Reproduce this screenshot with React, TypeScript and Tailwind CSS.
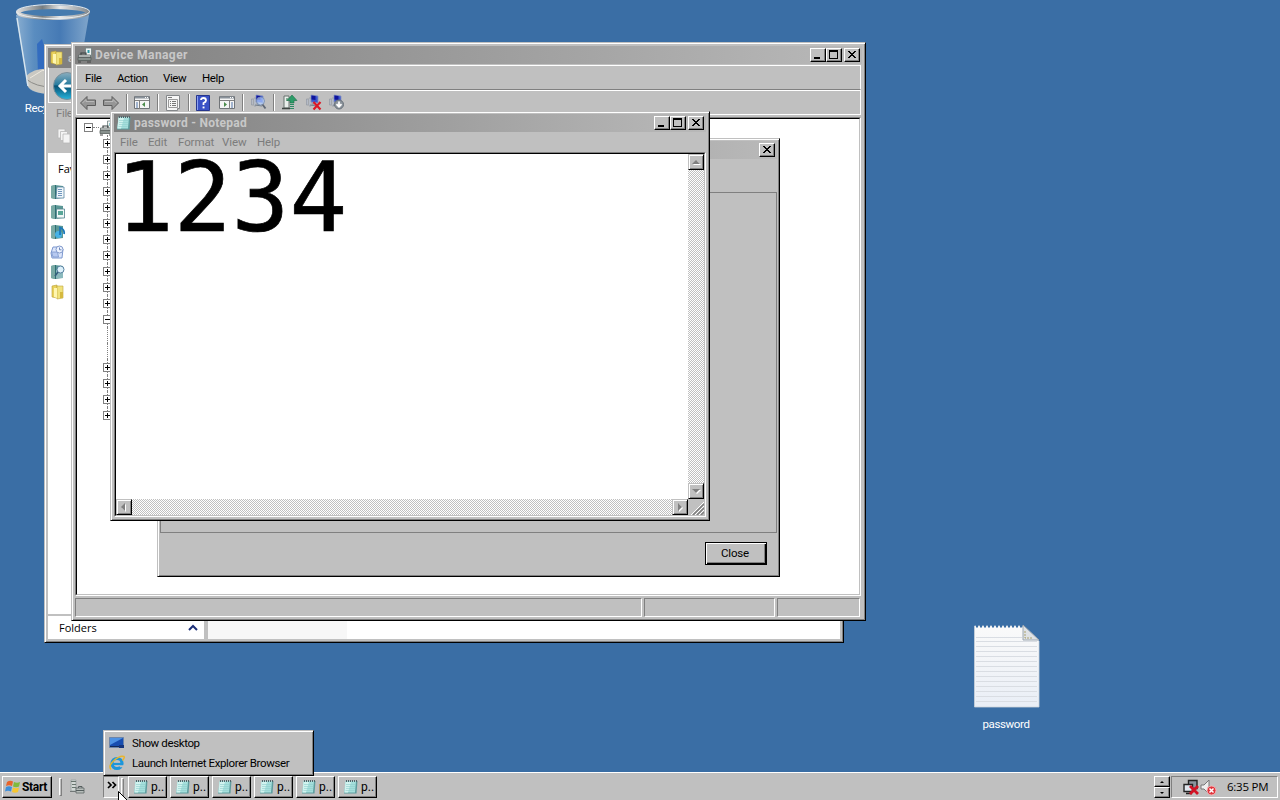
import type { ReactNode } from "react";
import clsx from "clsx";

/* =======================
   Data
======================= */

// true = collapsed (+), false = expanded (-), null = blank row under an open node
const treeRows: (boolean | null)[] = [
  true, true, true, true, true, true, true, true, true, true, true,
  false, null, null,
  true, true, true, true,
];

const notepadMenu = [
  { label: "File", width: "w-[28px]" },
  { label: "Edit", width: "w-[30px]" },
  { label: "Format", width: "w-[44px]" },
  { label: "View", width: "w-[35px]" },
  { label: "Help", width: "w-[30px]" },
];

const deviceMenu = [
  { label: "File", width: "w-[32px]" },
  { label: "Action", width: "w-[46px]" },
  { label: "View", width: "w-[39px]" },
  { label: "Help", width: "w-[30px]" },
];

const favorites = ["doc", "picture", "music", "recent", "search", "folder"];

const tasks = [1, 2, 3, 4, 5, 6];

/* =======================
   Shared styles
======================= */

const frame =
  "border border-[#c0c0c0] border-r-black border-b-black bg-[#c0c0c0] shadow-[inset_1px_1px_0_#fff,inset_-1px_-1px_0_#808080]";
const button =
  "border border-white border-r-black border-b-black bg-[#c0c0c0] shadow-[inset_-1px_-1px_0_#808080]";
const dither =
  "bg-[repeating-conic-gradient(#c0c0c0_0_25%,#fff_0_50%)] bg-[length:2px_2px]";

/* =======================
   Icons
======================= */

function NotepadIcon({ className }: { className?: string }) {
  return (
    <svg className={clsx("shrink-0", className)} width="16" height="16" viewBox="0 0 16 16">
      <path d="M3 2h11.500l-1 12.500H1z" fill="#5d9c9e" />
      <path d="M2.500 2h10.500l-1 11.500H1.200z" fill="#a5dfdc" />
      <path d="M2.500 3h5.500l-3 10.500H1.500z" fill="#d2f3ef" />
      <path d="M3 5.500h9M3 7.500h9M3 9.500h9M2.500 11.500h9" stroke="#8fcecd" strokeWidth=".6" />
      <path d="M3 2h11" stroke="#52646a" strokeWidth="2" strokeDasharray="1 1" />
    </svg>
  );
}

function DeviceIcon() {
  return (
    <svg className="shrink-0" width="17" height="16" viewBox="0 0 17 16">
      <path d="M8.500 1h6v9h-6z" fill="#f0f4f3" stroke="#6f8080" strokeWidth=".8" />
      <path d="M10.500 3h2v3h-2z" fill="#2d9aa6" />
      <path d="M4 8V6h5v2" fill="none" stroke="#3d4545" strokeWidth="1.200" />
      <path d="M1.500 8h12v2h-12z" fill="#dde2e0" stroke="#5d6666" strokeWidth=".8" />
      <path d="M1 10.500h13v3H1z" fill="#87908d" stroke="#555d5c" strokeWidth=".8" />
      <path d="M1 15h3M10 15h4" stroke="#454545" />
    </svg>
  );
}

function FolderIcon() {
  return (
    <svg className="shrink-0" width="16" height="16" viewBox="0 0 16 16">
      <path d="M2 2l5-1v13l-5-1z" fill="#e8d15c" stroke="#b99d32" strokeWidth=".6" />
      <path d="M7 2h6v12l-6 1z" fill="#f0e27c" stroke="#c0a53a" strokeWidth=".6" />
      <path d="M4 4v9l3 1V4z" fill="#fff6b0" />
      <path d="M10 8h3v6h-3z" fill="#d6b93e" />
    </svg>
  );
}

function FavoriteIcon({ kind }: { kind: string }) {
  if (kind === "folder") return <FolderIcon />;
  if (kind === "recent") {
    return (
      <svg width="16" height="16" viewBox="0 0 16 16">
        <path d="M3 3h8l2 2-1 9H2L1 9z" fill="#dbe5fa" stroke="#7d98cf" />
        <path d="M1.500 8h6l1 5H3z" fill="#b7c9f0" stroke="#7a95cc" strokeWidth=".8" />
        <circle cx="9.500" cy="5.500" r="3.500" fill="#eef4ff" stroke="#8199cc" />
        <path d="M9.500 3.500v2.300h2" stroke="#6c86b8" fill="none" />
      </svg>
    );
  }
  return (
    <svg width="16" height="16" viewBox="0 0 16 16">
      <path d="M1 2l4-1 8 1v12l-8 1-4-1z" fill="#5a9795" />
      <path d="M1 2l4-1v14l-4-1z" fill="#79aaa5" />
      <path d="M5 1h1v14H5z" fill="#2e6e73" />
      {kind === "doc" && (
        <>
          <path d="M7 3h7v11H6z" fill="#f0f7fb" stroke="#5c86a2" strokeWidth=".8" />
          <path d="M8 5.500h4M8 7.500h4M8 9.500h4M8 11.500h4" stroke="#6f95bd" />
        </>
      )}
      {kind === "picture" && (
        <>
          <path d="M6.500 5h8v9h-8z" fill="#eff7f7" stroke="#51808c" strokeWidth=".8" />
          <path d="M8 7h5v4H8z" fill="#58a698" />
        </>
      )}
      {kind === "music" && (
        <>
          <circle cx="8.500" cy="10.500" r="3.500" fill="#45b2e6" />
          <path d="M10 11V3.500q5 2 4 6.500" stroke="#1c78b8" strokeWidth="1.800" fill="none" />
        </>
      )}
      {kind === "search" && (
        <>
          <path d="M6 6h7v8H6z" fill="#8bb9bd" />
          <circle cx="10.500" cy="5.500" r="3.500" fill="#def1fa" stroke="#56809f" />
          <path d="M8 8l-3 4" stroke="#345e7c" strokeWidth="1.500" />
        </>
      )}
    </svg>
  );
}

function ArrowIcon({ flip }: { flip?: boolean }) {
  return (
    <svg className={clsx(flip && "-scale-x-100")} width="16" height="16" viewBox="0 0 16 16">
      <path d="M.5 8L7 1.500V5h8.500v5.500H7v4z" fill="#969696" stroke="#5c5c5c" />
      <path d="M2.500 8L6 4.500V6.500h8" stroke="#b9b9b9" fill="none" />
    </svg>
  );
}

function PaneIcon({ flip }: { flip?: boolean }) {
  return (
    <svg width="16" height="15" viewBox="0 0 16 15">
      <path d="M.5 1.500h15v12H.5z" fill="#f4f4f4" stroke="#707478" />
      <path d="M1 2.500h14" stroke="#8a929b" strokeWidth="2" />
      <path d="M11 2.500h1M13 2.500h1" stroke="#fff" />
      <path d="M1 5.500h14" stroke="#808080" />
      <path d={flip ? "M10.500 6v8" : "M5.500 6v8"} stroke="#808080" />
      <path d={flip ? "M12 8h2M12 10h2M12 12h2" : "M2 8h2M2 10h2M2 12h2"} stroke="#4e73a8" />
      <path d={flip ? "M5 7l3 2.500L5 12z" : "M11 7L8 9.500l3 2.500z"} fill="#4a8c4a" />
    </svg>
  );
}

function PropertiesIcon() {
  return (
    <svg width="16" height="16" viewBox="0 0 16 16">
      <path d="M1.500.5h13v13h-2v2h-11z" fill="#f6f6f6" stroke="#84878a" />
      <path d="M3.500 4.500h9v8h-9z" fill="none" stroke="#9a9a9a" />
      <path d="M3 2.500h4M5 6.500h1M7 6.500h4M5 8.500h1M7 8.500h4M5 10.500h1M7 10.500h4" stroke="#777" />
    </svg>
  );
}

function HelpIcon() {
  return (
    <svg width="14" height="16" viewBox="0 0 14 16">
      <path d="M.5.5h13v15H.5z" fill="#3a52c6" stroke="#26368e" />
      <path d="M1.500 1v14" stroke="#8ba0f0" />
      <path d="M5 5q0-2 2.500-2T10 5.500Q10 7 7.500 8v2" stroke="#fff" strokeWidth="1.800" fill="none" />
      <path d="M6.600 11.500h1.900v1.900H6.600z" fill="#fff" />
    </svg>
  );
}

function ComputerIcon({ badge }: { badge: "scan" | "remove" | "down" }) {
  return (
    <svg width="17" height="17" viewBox="0 0 17 17">
      <path d="M1.500 5h1.500v6H1.500zM4 4h2v8H4z" fill="#c9cfda" stroke="#868d99" strokeWidth=".6" />
      <path d="M6 1l7 1v7l-7-1z" fill="#3a55cf" stroke="#8592be" strokeWidth=".8" />
      <path d="M6.500 1.500l4 .6v4l-4-.6z" fill="#10149a" />
      <path d="M5 11l7 1M8 9v3" stroke="#76808c" />
      {badge === "scan" && (
        <>
          <circle cx="10.500" cy="7" r="4" fill="#b9d4ff" fillOpacity=".65" stroke="#7289af" strokeWidth=".8" />
          <path d="M12.500 10.500l3 4" stroke="#606875" strokeWidth="1.800" />
        </>
      )}
      {badge === "remove" && <path d="M8.500 8l7 7.500M15.500 8l-7 7.500" stroke="#dc1826" strokeWidth="2.200" />}
      {badge === "down" && (
        <>
          <circle cx="11" cy="10.500" r="4.500" fill="#8c949c" stroke="#68717a" />
          <path d="M11 7.500v5M8.500 10.200L11 12.800l2.500-2.600" stroke="#fff" strokeWidth="1.700" fill="none" />
        </>
      )}
    </svg>
  );
}

function UpdateIcon() {
  return (
    <svg width="17" height="17" viewBox="0 0 17 17">
      <path d="M3 2h5v12H3z" fill="#e9eeeb" stroke="#69736f" />
      <path d="M5 4h2v3H5z" fill="#83ad96" />
      <path d="M1 14.500h8" stroke="#3f4542" strokeWidth="1.500" />
      <path d="M11 1l5 5.500h-3V9H9V6.500H6z" fill="#2d9c69" stroke="#1b6f48" strokeWidth=".6" />
      <path d="M9 10.500h4M9 12.500h4M9 14.500h4" stroke="#2d8c63" />
    </svg>
  );
}

function RecycleBin() {
  return (
    <svg width="80" height="96" viewBox="0 0 80 96">
      <defs>
        <linearGradient id="bin" x1="0" x2="1">
          <stop offset="0" stopColor="#b4d0e8" />
          <stop offset=".25" stopColor="#6b9dce" />
          <stop offset=".6" stopColor="#4c80bd" />
          <stop offset="1" stopColor="#a5c3df" />
        </linearGradient>
        <linearGradient id="rim" x1="0" x2="1">
          <stop offset="0" stopColor="#dcdcdc" />
          <stop offset=".35" stopColor="#777d80" />
          <stop offset=".6" stopColor="#e6e7e7" />
          <stop offset="1" stopColor="#858b90" />
        </linearGradient>
      </defs>
      <path d="M4 14l12 71q2 8 25 8t24-9l12-70z" fill="url(#bin)" fillOpacity=".65" />
      <path d="M25 43l5-5 3 10 4 25H26z" fill="#245fc0" fillOpacity=".7" />
      <path d="M14 75q9-9 26-7 15-2 26 8l-1 9q-2 8-24 8t-26-9z" fill="#c9c8c2" />
      <path d="M14 78q10 8 26 8t26-8" fill="none" stroke="#8c8c88" />
      <path d="M18 77l13-8 8 8 9-7 13 9" fill="none" stroke="#eee9de" />
      <path d="M5 17l11 68" stroke="#d7e5ee" strokeWidth="1.500" />
      <ellipse cx="41" cy="11.500" rx="35" ry="5.500" fill="#467bae" stroke="url(#rim)" strokeWidth="4" />
      <ellipse cx="41" cy="10.500" rx="36.500" ry="7" fill="none" stroke="#e9edef" strokeWidth="1" />
    </svg>
  );
}

function TextFile() {
  return (
    <svg width="66" height="84" viewBox="0 0 66 84">
      <defs>
        <linearGradient id="paper" x1="0" y1="0" x2="0" y2="1">
          <stop offset="0" stopColor="#fafafa" />
          <stop offset="1" stopColor="#e9eef6" />
        </linearGradient>
      </defs>
      <path d="M.5 2h47L65 17v66H.5z" fill="url(#paper)" stroke="#cdd3da" strokeWidth=".8" />
      <path
        d="M2 13.500h46M2 17.500h61M2 22.500h61M2 27.500h61M2 32.500h61M2 37.500h61M2 42.500h61M2 47.500h61M2 52.500h61M2 57.500h61M2 62.500h61M2 67.500h61M2 72.500h61M2 77.500h61"
        stroke="#d9dde3"
      />
      <path d="M2 2h46" stroke="#3a6ea5" strokeWidth="3" strokeDasharray="2 2" />
      <path d="M49 1v15h16z" fill="#dfe2e5" stroke="#9ea8b1" />
      <path d="M51 7v7h7" fill="none" stroke="#aaa26f" strokeDasharray="2 1" />
    </svg>
  );
}

function StartLogo() {
  return (
    <svg className="shrink-0" width="16" height="16" viewBox="0 0 16 16">
      <path d="M2 3q3-2 6-.5L7 7Q4 5.500 1 7z" fill="#e8642b" />
      <path d="M9 3q3 1.500 6 0l-1 4.500q-3 1.500-6 0z" fill="#7fba3c" />
      <path d="M1 8q3-1.500 6 0l-1 4.500Q3 11 0 12.500z" fill="#3d8fdb" />
      <path d="M8 8.500q3 1.500 6 0L13 13q-3 1.500-6 0z" fill="#f6c630" />
    </svg>
  );
}

function ServerIcon() {
  return (
    <svg width="17" height="17" viewBox="0 0 17 17">
      <path d="M2 1h5v11H2z" fill="#d3d9d6" stroke="#98a09e" strokeWidth=".8" />
      <path d="M2 2.500h5M3 5.500h4M3 8.500h4" stroke="#67746e" />
      <path d="M7 9h8v5H7z" fill="#b8bebb" stroke="#5d6666" strokeWidth=".8" />
      <path d="M9.500 9V7.500h3.500V9M7 11.500h8" stroke="#555f5f" fill="none" />
      <path d="M1 12.500h6" stroke="#727878" />
    </svg>
  );
}

function ShowDesktopIcon() {
  return (
    <svg width="16" height="14" viewBox="0 0 16 14">
      <path d="M.5 1.500h14v10H.5z" fill="#174db0" stroke="#6e86aa" />
      <path d="M1 2h13L1 9z" fill="#4d91e3" />
      <path d="M1 10.500h13" stroke="#112959" />
      <path d="M10 9h5v3h-5z" fill="#15357c" />
    </svg>
  );
}

function ExplorerBrowserIcon() {
  return (
    <svg width="16" height="16" viewBox="0 0 16 16">
      <circle cx="8" cy="8.500" r="5" fill="none" stroke="#1d96db" strokeWidth="3.200" />
      <path d="M4 9h9" stroke="#1d96db" strokeWidth="2.200" />
      <path d="M10 10.200h5v2h-4z" fill="#c0c0c0" />
      <path d="M2 14.500Q-1 11 5 5.500T15 1.500q1 1-1.500 4" fill="none" stroke="#e8b52d" strokeWidth="1.500" />
    </svg>
  );
}

/* =======================
   Window parts
======================= */

function Glyph({ type }: { type: "min" | "max" | "close" }) {
  return (
    <svg width="14" height="12" viewBox="0 0 14 12" shapeRendering="crispEdges">
      {type === "min" && <path d="M3 8h6v2H3z" />}
      {type === "max" && <path d="M2 1h9v9H2zM3 3v6h7V3z" fillRule="evenodd" />}
      {type === "close" && (
        <path d="M3 2h2v1h1v1h2V3h1V2h2v1h-1v1H9v1H8v1h1v1h1v1h1v1H9V8H8V7H6v1H5v1H3V8h1V7h1V6h1V5H5V4H4V3H3z" />
      )}
    </svg>
  );
}

function Controls({ closeOnly }: { closeOnly?: boolean }) {
  return (
    <div className="ml-auto flex shrink-0">
      {!closeOnly && (
        <>
          <button className={clsx("h-[14px] w-4", button)}><Glyph type="min" /></button>
          <button className={clsx("mr-[2px] h-[14px] w-4", button)}><Glyph type="max" /></button>
        </>
      )}
      <button className={clsx("h-[14px] w-4", button)}><Glyph type="close" /></button>
    </div>
  );
}

function TitleBar({ icon, className, children }: { icon: ReactNode; className?: string; children: ReactNode }) {
  return (
    <div className={clsx("flex h-[18px] shrink-0 items-center bg-linear-to-r from-[#808080] to-[#b9b9b9] px-[2px]", className)}>
      {icon}
      {children}
      <Controls />
    </div>
  );
}

function Expander({ collapsed }: { collapsed: boolean }) {
  return (
    <svg className="block shrink-0" width="9" height="9" viewBox="0 0 9 9" shapeRendering="crispEdges">
      <path d="M.5.5h8v8h-8z" fill="#fff" stroke="#808080" />
      <path d="M2 4h5v1H2z" />
      {collapsed && <path d="M4 2h1v5H4z" />}
    </svg>
  );
}

function ScrollButton({ d }: { d: string }) {
  return (
    <button className={clsx("h-4 w-4 shrink-0", frame)}>
      <svg width="14" height="14" viewBox="0 0 14 14">
        <path d={d} fill="#fff" transform="translate(1 1)" />
        <path d={d} fill="#808080" />
      </svg>
    </button>
  );
}

function Separator() {
  return <div className="h-[18px] w-[2px] border-l border-[#808080] bg-white" />;
}

/* =======================
   Windows
======================= */

function ExplorerWindow() {
  return (
    <div className={clsx("absolute top-[44px] left-[44px] flex h-[599px] w-[800px] flex-col p-[3px]", frame)}>
      <div className="flex h-[19px] shrink-0 items-center bg-[#808080] pl-px text-[#c0c0c0]">
        <FolderIcon />
        <span className="ml-[3px] font-bold">a</span>
      </div>
      <div className="h-[36px] shrink-0 border border-white border-t-[#808080] pl-[3px]">
        <svg width="34" height="34" viewBox="0 0 34 34">
          <defs>
            <linearGradient id="back" x1="0" y1="0" x2="0" y2="1">
              <stop offset="0" stopColor="#8baebf" />
              <stop offset=".45" stopColor="#287c9f" />
              <stop offset=".5" stopColor="#075276" />
              <stop offset="1" stopColor="#28b5dc" />
            </linearGradient>
          </defs>
          <circle cx="15" cy="18" r="13.500" fill="url(#back)" stroke="#7b8f9a" />
          <path d="M21 18H9M14 12l-6 6 6 6" stroke="#fff" strokeWidth="3" fill="none" />
        </svg>
      </div>
      <div className="h-[20px] shrink-0 pl-[8px] leading-[20px] text-[#808080]">File</div>
      <div className="h-[30px] shrink-0 pt-[5px] pl-[8px]">
        <svg width="18" height="18" viewBox="0 0 18 18">
          <path d="M2 1h7v9H2z" fill="#f4f4f4" stroke="#b8b8b8" strokeWidth=".8" />
          <path d="M4.500 3.500h7v9h-7z" fill="#f4f4f4" stroke="#b8b8b8" strokeWidth=".8" />
          <path d="M7 6h7v9H7z" fill="#f4f4f4" stroke="#b8b8b8" strokeWidth=".8" />
        </svg>
      </div>
      <div className="flex flex-1 bg-white">
        <div className="flex w-[156px] flex-col">
          <div className="h-[31px] pt-[9px] pl-[10px] font-['Open_Sans',sans-serif] text-[11px] leading-[14px] tracking-normal">
            Favorites
          </div>
          <div className="flex flex-1 flex-col gap-1 pl-[2px]">
            {favorites.map((kind) => (
              <div key={kind} className="h-4"><FavoriteIcon kind={kind} /></div>
            ))}
          </div>
          <div className="flex h-[25px] items-start justify-between border-t-2 border-[#c0c0c0] pt-[5px] pr-[6px] pl-[11px] font-['Open_Sans',sans-serif] text-[11px] leading-[14px] tracking-normal">
            Folders
            <svg className="mt-[3px]" width="10" height="8" viewBox="0 0 10 8">
              <path d="M1 6l4-4 4 4" stroke="#1c2f78" strokeWidth="2" fill="none" />
            </svg>
          </div>
        </div>
        <div className="w-[4px] bg-[#c0c0c0]" />
        <div className="w-[139px] bg-[#f7f7f7]" />
      </div>
    </div>
  );
}

function DeviceManagerWindow() {
  return (
    <div className={clsx("absolute top-[42px] left-[71px] flex h-[579px] w-[795px] flex-col p-[3px]", frame)}>
      <TitleBar icon={<DeviceIcon />}>
        <span className="ml-px text-[12px] font-bold tracking-[.42px] text-[#c8c8c8]">Device Manager</span>
      </TitleBar>

      <div className="mx-px mt-px h-[25px] shrink-0 border border-white border-b-[#808080]">
        <div className="flex pt-[5px] pl-[8px] leading-[14px]">
          {deviceMenu.map((item) => (
            <span key={item.label} className={item.width}>{item.label}</span>
          ))}
        </div>
      </div>
      <div className="mx-px flex h-[25px] shrink-0 items-center border border-white pl-[3px]">
        <ArrowIcon />
        <span className="ml-[7px]"><ArrowIcon flip /></span>
        <span className="mr-[6px] ml-[7px]"><Separator /></span>
        <PaneIcon />
        <span className="mr-[6px] ml-[7px]"><Separator /></span>
        <PropertiesIcon />
        <span className="mr-[6px] ml-[7px]"><Separator /></span>
        <HelpIcon />
        <span className="ml-[9px]"><PaneIcon flip /></span>
        <span className="mr-[6px] ml-[7px]"><Separator /></span>
        <ComputerIcon badge="scan" />
        <span className="mr-[6px] ml-[6px]"><Separator /></span>
        <UpdateIcon />
        <span className="ml-[7px]"><ComputerIcon badge="remove" /></span>
        <span className="ml-[6px]"><ComputerIcon badge="down" /></span>
      </div>

      <div className="mt-[2px] mr-px flex-1 border border-white border-t-[#808080] border-l-[#808080] bg-white">
        <div className="h-full border border-[#c0c0c0] border-t-black border-l-black">
          <div className="flex h-[16px] pt-[4px] pl-[7px]">
            <Expander collapsed={false} />
            <div className="mt-[4px] w-[6px] border-t border-dotted border-[#808080]" />
            <div className="-mt-[3px]"><DeviceIcon /></div>
          </div>
          {treeRows.map((collapsed, i) => (
            <div key={i} className="flex h-[16px] flex-col pl-[26px]">
              <div className={clsx("ml-[4px] w-px border-l border-dotted border-[#808080]", collapsed === null ? "h-4" : "h-[4px]")} />
              {collapsed !== null && <Expander collapsed={collapsed} />}
              {collapsed !== null && i < treeRows.length - 1 && (
                <div className="ml-[4px] h-[3px] w-px border-l border-dotted border-[#808080]" />
              )}
            </div>
          ))}
        </div>
      </div>

      <div className="mt-[2px] mr-[2px] flex h-[19px] shrink-0 gap-[2px]">
        <div className="w-[567px] border border-white border-t-[#808080] border-l-[#808080]" />
        <div className="w-[131px] border border-white border-t-[#808080] border-l-[#808080]" />
        <div className="flex-1 border border-white border-t-[#808080] border-l-[#808080]" />
      </div>
    </div>
  );
}

function PropertiesDialog() {
  return (
    <div className={clsx("absolute top-[138px] left-[157px] flex h-[439px] w-[623px] flex-col p-[2px]", frame)}>
      <div className="flex h-[18px] shrink-0 items-center bg-linear-to-r from-[#808080] to-[#b9b9b9] pr-[2px]">
        <Controls closeOnly />
      </div>
      <div className="mt-[33px] h-[341px] shrink-0 border border-[#808080]" />
      <div className="flex justify-end pt-[9px] pr-[10px]">
        <button className="h-[23px] w-[62px] border border-black bg-[#c0c0c0] pr-[2px] pb-[2px] text-center leading-[18px] tracking-[-.2px] shadow-[inset_1px_1px_0_#fff,inset_-1px_-1px_0_#000,inset_-2px_-2px_0_#808080]">
          Close
        </button>
      </div>
    </div>
  );
}

function NotepadWindow() {
  return (
    <div className={clsx("absolute top-[111px] left-[110px] flex h-[410px] w-[600px] flex-col p-[3px]", frame)}>
      <TitleBar className="-mt-px mb-px" icon={<NotepadIcon />}>
        <span className="ml-[2px] text-[12px] font-bold tracking-[.25px] text-[#c8c8c8]">password - Notepad</span>
      </TitleBar>
      <div className="flex h-[19px] shrink-0 pt-[2px] pl-[6px] leading-[14px] tracking-[-.1px] text-[#7c7c7c]">
        {notepadMenu.map((item) => (
          <span key={item.label} className={item.width}>{item.label}</span>
        ))}
      </div>
      <div className="flex-1 border border-white border-t-[#808080] border-l-[#808080]">
        <div className="flex h-full flex-col border border-[#c0c0c0] border-t-black border-l-black">
          <div className="flex flex-1">
            <div className="flex-1 bg-white font-['DejaVu_Sans_Mono',monospace] text-[96px] leading-[89px] tracking-[0px] text-black [-webkit-text-stroke:.7px_black]">
              1234
            </div>
            <div className={clsx("flex w-4 flex-col justify-between", dither)}>
              <ScrollButton d="M3 9h8L7 5z" />
              <ScrollButton d="M3 5h8L7 9z" />
            </div>
          </div>
          <div className="flex h-4">
            <div className={clsx("flex flex-1 justify-between", dither)}>
              <ScrollButton d="M8 3v8L4 7z" />
              <ScrollButton d="M5 3v8l4-4z" />
            </div>
            <svg width="16" height="16" viewBox="0 0 16 16">
              <path d="M3 16L16 3M7 16l9-9M11 16l5-5" stroke="#fff" />
              <path d="M5 16L16 5M9 16l7-7M13 16l3-3" stroke="#808080" strokeWidth="1.500" />
            </svg>
          </div>
        </div>
      </div>
    </div>
  );
}

/* =======================
   Taskbar
======================= */

function QuickLaunchMenu() {
  return (
    <div className={clsx("absolute top-[730px] left-[103px] h-[46px] w-[211px] px-[5px] py-[2px]", frame)}>
      <div className="flex h-5 items-center gap-[7px]">
        <ShowDesktopIcon />
        <span>Show desktop</span>
      </div>
      <div className="flex h-5 items-center gap-[7px]">
        <ExplorerBrowserIcon />
        <span>Launch Internet Explorer Browser</span>
      </div>
    </div>
  );
}

function Taskbar() {
  return (
    <div className="flex h-[28px] items-start border-t border-white bg-[#c0c0c0] pt-[3px] pr-[2px] pl-[2px]">
      <button className={clsx("flex h-[22px] w-[50px] items-center pl-[2px]", button)}>
        <StartLogo />
        <span className="ml-px text-[12px] font-bold tracking-[-.3px]">Start</span>
      </button>
      <div className="mt-[2px] ml-[7px] h-[18px] w-[3px] border border-white border-r-[#808080] border-b-[#808080]" />
      <div className="mt-[3px] ml-[7px]"><ServerIcon /></div>
      <div className="ml-[17px] flex h-[22px] w-[16px] justify-center border border-[#808080] border-r-white border-b-white bg-[#d0d0d0]">
        <svg className="mt-[4px] ml-px" width="10" height="8" viewBox="0 0 10 8">
          <path d="M1 1l3 3-3 3M5.500 1l3 3-3 3" stroke="#000" strokeWidth="1.700" fill="none" />
        </svg>
      </div>
      <div className="mt-[2px] ml-[2px] h-[18px] w-[3px] border border-white border-r-[#808080] border-b-[#808080]" />
      <div className="ml-[4px] flex gap-[3px]">
        {tasks.map((id) => (
          <button key={id} className={clsx("flex h-[22px] w-[39px] items-center pl-[4px]", button)}>
            <NotepadIcon />
            <span className="ml-[2px] text-[12px] tracking-[.1px]">p..</span>
          </button>
        ))}
      </div>

      <div className="ml-auto flex">
        <div className="w-4">
          <div className={clsx("flex h-[11px] items-center justify-center", button)}>
            <svg width="4" height="2"><path d="M0 2l2-2 2 2z" /></svg>
          </div>
          <div className={clsx("flex h-[11px] items-center justify-center", button)}>
            <svg width="4" height="2"><path d="M0 0l2 2 2-2z" /></svg>
          </div>
        </div>
        <div className="ml-px flex h-[22px] w-[107px] items-center border border-white border-t-[#808080] border-l-[#808080] pl-[11px]">
          <svg width="17" height="17" viewBox="0 0 17 17">
            <path d="M5.500 1.500h8.500v8H5.500z" fill="#8a939c" stroke="#222" strokeWidth="1.400" />
            <path d="M1 5.500h8.500v7H1zM3 14.500h6" fill="#dfe6ee" stroke="#222" strokeWidth="1.400" />
            <path d="M7 7l8 8M15 7l-8 8" stroke="#d21224" strokeWidth="2.800" />
          </svg>
          <svg width="17" height="17" viewBox="0 0 17 17">
            <path d="M1 6h3l5-5v14l-5-5H1z" fill="#eee" stroke="#777" />
            <circle cx="11.500" cy="11.500" r="4.500" fill="#e0353d" stroke="#f6b6b8" />
            <path d="M9.500 9.500l4 4M13.500 9.500l-4 4" stroke="#fff" strokeWidth="1.500" />
          </svg>
          <span className="ml-[10px] font-['Open_Sans',sans-serif] text-[11.500px] tracking-[-.25px] whitespace-nowrap">6:35 PM</span>
        </div>
      </div>
    </div>
  );
}

/* =======================
   Page
======================= */

export default function App() {
  return (
    <div className="relative flex h-[800px] w-[1280px] flex-col overflow-hidden bg-[#3a6ea5] font-['Roboto','Liberation_Sans',sans-serif] text-[11.500px] leading-[14px] tracking-[-.38px] text-black select-none">
      <div className="flex-1">
        {/* Desktop icons */}
        <div className="absolute top-[1px] left-[12px] flex w-[80px] flex-col items-center text-white">
          <RecycleBin />
          <span className="mt-[4px]">Recycle Bin</span>
        </div>
        <div className="absolute top-[624px] left-[967px] flex w-[80px] flex-col items-center text-white">
          <TextFile />
          <span className="mt-[9px] mr-[2px]">password</span>
        </div>

        <ExplorerWindow />
        <DeviceManagerWindow />
        <PropertiesDialog />
        <NotepadWindow />
      </div>

      <Taskbar />
      <QuickLaunchMenu />

      {/* Mouse pointer */}
      <svg className="absolute top-[791px] left-[118px]" width="13" height="20" viewBox="0 0 13 20">
        <path d="M.5.5v16l4-4 3 6 2-1-3-5.500h5.500z" fill="#fff" stroke="#000" />
      </svg>
    </div>
  );
}
